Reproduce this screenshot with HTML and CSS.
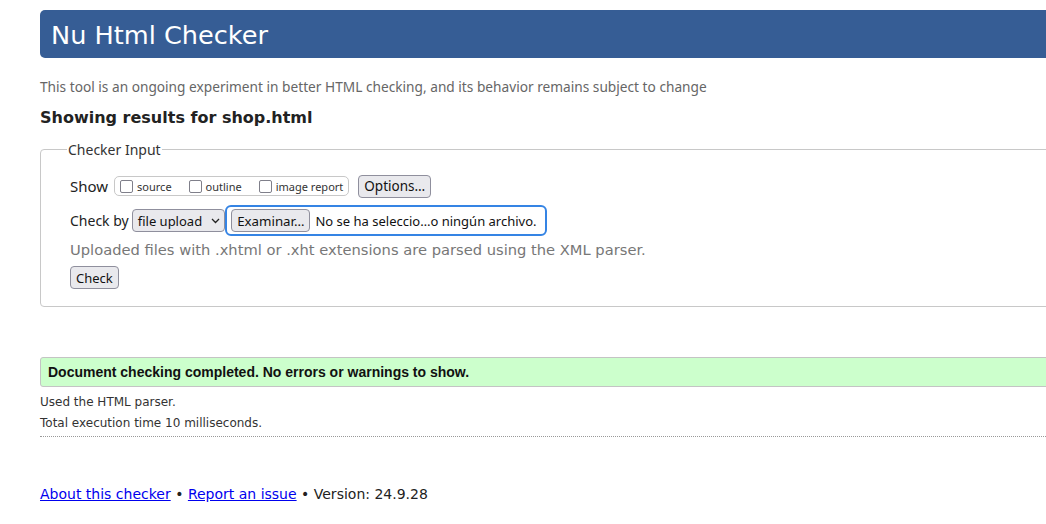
FILE: index.html
```html
<!DOCTYPE html>
<html lang="en">
<head>
<meta charset="utf-8">
<title>Showing results for shop.html - Nu Html Checker</title>
<link rel="stylesheet" href="styles.css">
</head>
<body>
<div class="page">
  <h1 class="banner">Nu Html Checker</h1>
  <p class="tagline">This tool is an ongoing experiment in better HTML checking, and its behavior remains subject to change</p>
  <h2 class="results-title">Showing results for shop.html</h2>
  <fieldset class="input-box">
    <legend class="legend">Checker Input</legend>
    <div class="row show-row">
      <span class="row-label">Show</span>
      <span class="opts">
        <label class="opt"><span class="cb"></span>source</label>
        <label class="opt"><span class="cb"></span>outline</label>
        <label class="opt"><span class="cb"></span>image report</label>
      </span>
      <span class="btn options-btn">Options…</span>
    </div>
    <div class="row check-row">
      <span class="row-label check-label">Check by</span>
      <span class="select">file upload
        <svg class="chev" width="9" height="6" viewBox="0 0 9 6"><path d="M1 1 L4.5 4.5 L8 1" fill="none" stroke="#222" stroke-width="1.3"/></svg>
      </span>
      <span class="file">
        <span class="btn file-btn">Examinar…</span>
        <span class="file-name">No se ha seleccio…o ningún archivo.</span>
      </span>
    </div>
    <p class="hint">Uploaded files with .xhtml or .xht extensions are parsed using the XML parser.</p>
    <span class="btn check-btn">Check</span>
  </fieldset>
  <div class="success">Document checking completed. No errors or warnings to show.</div>
  <p class="meta first">Used the HTML parser.</p>
  <p class="meta">Total execution time 10 milliseconds.</p>
  <hr class="sep">
  <p class="footer"><a href="#">About this checker</a> • <a href="#">Report an issue</a> • Version: 24.9.28</p>
</div>
</body>
</html>
```
FILE: styles.css
```css
html { overflow: hidden; }
body {
  margin: 0;
  background: #fff;
  font-family: "DejaVu Sans", sans-serif;
  color: #222;
}
.page {
  width: 1100px;
  padding: 10px 0 0 40px;
}
.banner {
  margin: 0;
  height: 48px;
  box-sizing: border-box;
  padding: 9px 0 0 11px;
  background: #365d95;
  color: #fff;
  font-weight: normal;
  font-size: 25.6px;
  line-height: 32px;
  border-radius: 5px;
}
.tagline {
  margin: 19px 0 0;
  font-family: "Noto Sans", sans-serif;
  font-size: 13.7px;
  line-height: 20px;
  color: #666;
}
.results-title {
  margin: 11px 0 0;
  font-size: 16px;
  font-weight: bold;
  line-height: 20px;
  color: #222;
}
.input-box {
  margin: 12px 0 0;
  border: 1px solid #c8c8c8;
  border-radius: 4px;
  padding: 14px 29px 17px;
  font-family: "Noto Sans", sans-serif;
}
.legend {
  margin-left: -3px;
  padding: 0 1px;
  font-size: 14px;
  color: #333;
}
.row {
  display: flex;
  align-items: center;
}
.row-label {
  font-size: 15px;
  color: #222;
}
.check-label {
  font-size: 14px;
}
.show-row {
  margin-top: 1px;
  height: 24px;
}
.opts {
  display: flex;
  align-items: center;
  margin-left: 6px;
  height: 20px;
  box-sizing: border-box;
  border: 1px solid #c8c8c8;
  border-radius: 5px;
  padding: 0 5px;
  font-size: 11px;
  color: #333;
}
.opt {
  display: flex;
  align-items: center;
  gap: 4px;
}
.opt + .opt {
  margin-left: 17px;
}
.cb {
  display: inline-block;
  width: 13px;
  height: 13px;
  border: 1.5px solid #7f7f8a;
  border-radius: 2px;
  box-sizing: border-box;
}
.btn {
  display: inline-flex;
  align-items: center;
  box-sizing: border-box;
  border: 1px solid #8f8f9d;
  border-radius: 4px;
  background: #e9e9ed;
  color: #111;
  font-family: "Noto Sans", sans-serif;
  font-size: 13px;
}
.options-btn {
  margin-left: 9px;
  height: 23px;
  padding: 0 5px;
  font-size: 13.5px;
}
.check-row {
  margin-top: 7px;
  height: 31px;
}
.select {
  display: inline-flex;
  align-items: center;
  gap: 9px;
  margin-left: 3px;
  height: 23px;
  box-sizing: border-box;
  border: 1px solid #8f8f9d;
  border-radius: 4px;
  background: #e9e9ed;
  padding: 0 4px 0 5px;
  font-size: 13px;
  color: #111;
}
.file {
  display: inline-flex;
  align-items: center;
  gap: 5px;
  margin-left: 0;
  height: 31px;
  width: 322px;
  box-sizing: border-box;
  border: 2px solid #3584e4;
  border-radius: 6px;
  padding: 0 4px;
}
.file-btn {
  height: 23px;
  padding: 0 5px;
  font-size: 13.3px;
}
.file-name {
  font-size: 13px;
  color: #111;
}
.hint {
  margin: 4px 0 0;
  font-family: "DejaVu Sans", sans-serif;
  font-size: 14.7px;
  line-height: 20px;
  color: #777;
}
.check-btn {
  margin-top: 6px;
  height: 23px;
  padding: 0 5px;
}
.success {
  margin-top: 50px;
  height: 30px;
  box-sizing: border-box;
  border: 1px solid #c4c4c4;
  border-radius: 3px;
  background: #ccffcc;
  padding: 0 7px;
  display: flex;
  align-items: center;
  font-family: "Liberation Sans", Arial, sans-serif;
  font-weight: bold;
  font-size: 14px;
  color: #111;
}
.meta {
  margin: 6px 0 0;
  font-size: 12px;
  line-height: 15px;
  color: #333;
}
.meta.first {
  margin-top: 8px;
}
.sep {
  margin: 5px 0 0;
  border: 0;
  border-top: 1px dotted #999;
  height: 0;
}
.footer {
  margin: 48px 0 0;
  font-size: 14px;
  line-height: 18px;
  color: #222;
}
.footer a {
  color: #0000ee;
}
```
